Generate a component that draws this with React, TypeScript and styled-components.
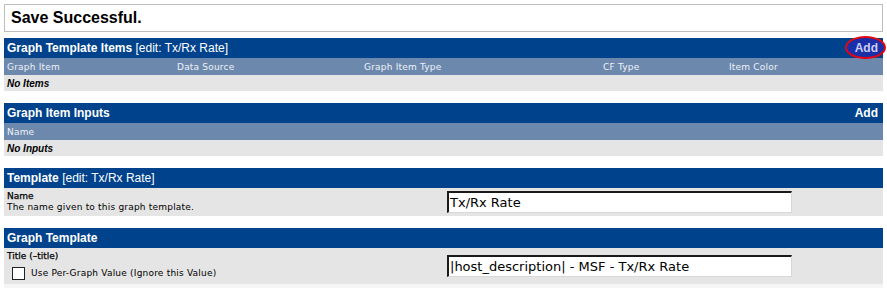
import React from "react";
import styled, { createGlobalStyle } from "styled-components";

const GlobalStyle = createGlobalStyle`
  html, body {
    margin: 0;
    padding: 0;
    background: #ffffff;
  }
  body {
    padding: 4px;
    font-family: "Liberation Sans", Arial, sans-serif;
  }
`;

const Page = styled.div`
  width: 879px;
  display: flex;
  flex-direction: column;
`;

const Message = styled.div`
  height: 26px;
  border: 1px solid #bdbdbd;
  display: flex;
  align-items: center;
  padding-left: 6px;
  font-size: 16px;
  font-weight: bold;
  color: #000;
  margin-bottom: 6px;
`;

const Section = styled.div`
  display: flex;
  flex-direction: column;
  margin-bottom: 12px;

  &:last-child {
    margin-bottom: 0;
  }
`;

const Header = styled.div`
  height: 20px;
  background: #00438c;
  color: #fff;
  display: flex;
  align-items: center;
  justify-content: space-between;
  padding: 0 5px 0 3px;
  font-size: 12px;
`;

const HeaderTitle = styled.span`
  font-weight: bold;
`;

const HeaderEdit = styled.span`
  font-weight: normal;
`;

const AddLink = styled.span<{ $circled?: boolean }>`
  position: relative;
  z-index: 1;
  font-weight: bold;
  font-size: 12px;
  color: ${(p) => (p.$circled ? "#c9cdf5" : "#ffffff")};
  ${(p) =>
    p.$circled &&
    `
    &::before {
      content: "";
      position: absolute;
      left: -10px;
      top: -5px;
      width: 37px;
      height: 19px;
      border: 2px solid #e30613;
      border-radius: 50%;
      background: #1b2fa8;
      z-index: -1;
    }
  `}
`;

const ColumnRow = styled.div<{ $cols: string }>`
  height: 17px;
  background: #6d88ad;
  display: grid;
  grid-template-columns: ${(p) => p.$cols};
  align-items: center;
  padding-left: 3px;
`;

const ColumnCell = styled.span`
  font-family: "DejaVu Sans", Verdana, sans-serif;
  font-size: 9px;
  color: #eef2f7;
  letter-spacing: 0.2px;
`;

const EmptyRow = styled.div`
  height: 16px;
  background: #e5e5e5;
  display: flex;
  align-items: center;
  padding-left: 3px;
  font-family: "Liberation Sans", Arial, sans-serif;
  font-size: 10px;
  font-weight: bold;
  font-style: italic;
  color: #000;
`;

const FormRow = styled.div<{ $height: number; $light?: boolean }>`
  height: ${(p) => p.$height}px;
  background: ${(p) => (p.$light ? "#f5f5f5" : "#e5e5e5")};
  display: grid;
  grid-template-columns: 443px 1fr;
`;

const FieldInfo = styled.div`
  display: flex;
  flex-direction: column;
  padding: 3px 0 0 3px;
  font-family: "DejaVu Sans", Verdana, sans-serif;
  font-size: 9px;
  color: #000;
  line-height: 11px;
`;

const FieldLabel = styled.span`
  font-weight: normal;
  -webkit-text-stroke: 0.25px #000;
`;

const FieldHelp = styled.span`
  letter-spacing: 0.2px;
`;

const CheckLine = styled.label`
  display: flex;
  align-items: center;
  gap: 6px;
  margin-top: 5px;
  padding-left: 5px;
  letter-spacing: 0.2px;
`;

const CheckBox = styled.span`
  width: 11px;
  height: 11px;
  border: 1px solid #222;
  background: #fff;
`;

const FieldInput = styled.div<{ $top: number }>`
  margin-top: ${(p) => p.$top}px;
  width: 341px;
  height: 19px;
  background: #fff;
  border-top: 2px solid #1a1a1a;
  border-left: 2px solid #1a1a1a;
  border-right: 1px solid #d8d8d8;
  border-bottom: 1px solid #d8d8d8;
  display: flex;
  align-items: center;
  padding-left: 1px;
  font-family: "DejaVu Sans", Verdana, sans-serif;
  font-size: 13px;
  color: #000;
`;

const itemCols = "170px 187px 239px 126px 1fr";

export default function App() {
  return (
    <>
      <GlobalStyle />
      <Page>
        <Message>Save Successful.</Message>

        <Section>
          <Header>
            <span>
              <HeaderTitle>Graph Template Items</HeaderTitle>{" "}
              <HeaderEdit>[edit: Tx/Rx Rate]</HeaderEdit>
            </span>
            <AddLink $circled>Add</AddLink>
          </Header>
          <ColumnRow $cols={itemCols}>
            <ColumnCell>Graph Item</ColumnCell>
            <ColumnCell>Data Source</ColumnCell>
            <ColumnCell>Graph Item Type</ColumnCell>
            <ColumnCell>CF Type</ColumnCell>
            <ColumnCell>Item Color</ColumnCell>
          </ColumnRow>
          <EmptyRow>No Items</EmptyRow>
        </Section>

        <Section>
          <Header>
            <HeaderTitle>Graph Item Inputs</HeaderTitle>
            <AddLink>Add</AddLink>
          </Header>
          <ColumnRow $cols="1fr">
            <ColumnCell>Name</ColumnCell>
          </ColumnRow>
          <EmptyRow>No Inputs</EmptyRow>
        </Section>

        <Section>
          <Header>
            <span>
              <HeaderTitle>Template</HeaderTitle>{" "}
              <HeaderEdit>[edit: Tx/Rx Rate]</HeaderEdit>
            </span>
          </Header>
          <FormRow $height={28}>
            <FieldInfo>
              <FieldLabel>Name</FieldLabel>
              <FieldHelp>The name given to this graph template.</FieldHelp>
            </FieldInfo>
            <div>
              <FieldInput $top={3}>Tx/Rx Rate</FieldInput>
            </div>
          </FormRow>
        </Section>

        <Section>
          <Header>
            <HeaderTitle>Graph Template</HeaderTitle>
          </Header>
          <FormRow $height={36}>
            <FieldInfo>
              <FieldLabel>Title (–title)</FieldLabel>
              <CheckLine>
                <CheckBox />
                Use Per-Graph Value (Ignore this Value)
              </CheckLine>
            </FieldInfo>
            <div>
              <FieldInput $top={7}>|host_description| - MSF - Tx/Rx Rate</FieldInput>
            </div>
          </FormRow>
          <FormRow $height={5} $light />
        </Section>
      </Page>
    </>
  );
}
